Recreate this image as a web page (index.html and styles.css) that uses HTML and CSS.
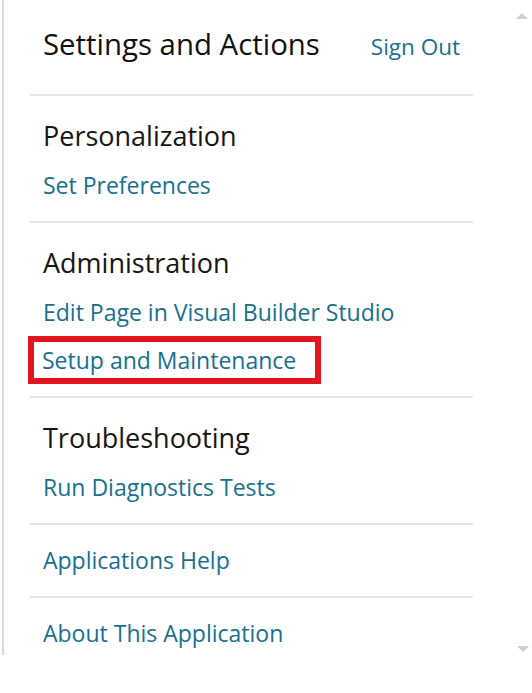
FILE: index.html
```html
<!DOCTYPE html>
<html lang="en">
<head>
<meta charset="utf-8">
<title>Settings and Actions</title>
<link rel="stylesheet" href="styles.css">
</head>
<body>
<div class="panel">
  <div class="scroll">
    <div class="header">
      <span class="title">Settings and Actions</span>
      <a class="signout" href="#">Sign Out</a>
    </div>
    <div class="section">
      <div class="heading">Personalization</div>
      <a class="link" href="#">Set Preferences</a>
    </div>
    <div class="section">
      <div class="heading">Administration</div>
      <a class="link" href="#">Edit Page in Visual Builder Studio</a>
      <a class="link highlight" href="#">Setup and Maintenance</a>
    </div>
    <div class="section">
      <div class="heading">Troubleshooting</div>
      <a class="link" href="#">Run Diagnostics Tests</a>
    </div>
    <div class="section">
      <a class="link" href="#">Applications Help</a>
    </div>
    <div class="section">
      <a class="link" href="#">About This Application</a>
    </div>
  </div>
  <span class="arrow up"></span>
  <span class="arrow down"></span>
</div>
</body>
</html>
```
FILE: styles.css
```css
html, body {
  margin: 0;
  padding: 0;
  background: #ffffff;
}
body {
  font-family: "Open Sans", "Noto Sans", sans-serif;
}
.panel {
  position: relative;
  margin-left: 2px;
  height: 655px;
  width: 530px;
  box-sizing: border-box;
  border-left: 2px solid #dcdcdc;
  overflow: hidden;
}
.scroll {
  width: 443px;
  margin-left: 26px;
}
.header {
  display: flex;
  align-items: baseline;
  justify-content: space-between;
  padding: 24px 13px 27px 13px;
}
.title {
  font-size: 29.4px;
  line-height: 40px;
  color: #111111;
}
.signout {
  font-size: 22.5px;
  line-height: 40px;
  color: #18708f;
  text-decoration: none;
}
.section {
  border-top: 2px solid #e6e6e6;
  padding: 11px 0 12px 13px;
  display: flex;
  flex-direction: column;
  align-items: flex-start;
}
.heading {
  font-size: 27px;
  line-height: 51px;
  padding-top: 3px;
  color: #161513;
}
.link {
  font-size: 23px;
  line-height: 48px;
  color: #18708f;
  text-decoration: none;
}
.link.highlight {
  box-sizing: border-box;
  width: 293px;
  margin-left: -15px;
  padding-left: 8px;
  border: 6px solid #e3151f;
  line-height: 36px;
}
.arrow {
  position: absolute;
  width: 0;
  height: 0;
  border-left: 6px solid transparent;
  border-right: 6px solid transparent;
}
.arrow.up {
  top: 13px;
  right: 4px;
  border-bottom: 6px solid #cfcfcf;
}
.arrow.down {
  bottom: 3px;
  right: 3px;
  border-top: 6px solid #cfcfcf;
}
```
